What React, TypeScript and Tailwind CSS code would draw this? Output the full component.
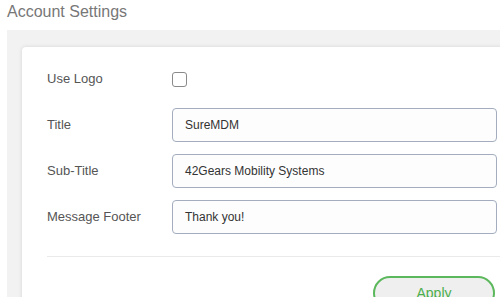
import React from "react";

const font = { fontFamily: '"Liberation Sans", Arial, sans-serif' };

function Row({ label, children }: { label: string; children: React.ReactNode }) {
  return (
    <div className="flex h-[34px] items-center">
      <div className="w-[125px] text-[13px] text-[#555]">{label}</div>
      {children}
    </div>
  );
}

function Field({ value }: { value: string }) {
  return (
    <div className="flex h-[34px] w-[325px] items-center rounded-[4px] border border-[#a3adbf] bg-[#fdfdfd] pl-[12px] text-[12px] text-[#333]">
      {value}
    </div>
  );
}

export default function App() {
  return (
    <div className="h-[297px] w-[500px] overflow-hidden bg-white" style={font}>
      <div className="h-[30px] pl-[7px] pt-[3px] text-[16px] leading-[18px] text-[#777]">Account Settings</div>
      <div className="ml-[7px] w-[540px] bg-[#f2f2f2] pl-[15px] pt-[17px]">
        <div className="rounded-[4px] bg-white pb-[20px] pl-[25px] pt-[15px] shadow-[0_0_4px_rgba(0,0,0,0.12)]">
          <div className="flex flex-col gap-[12px]">
            <Row label="Use Logo">
              <div className="h-[15px] w-[15px] rounded-[3px] border border-[#8a8a8a] bg-white" />
            </Row>
            <Row label="Title">
              <Field value="SureMDM" />
            </Row>
            <Row label="Sub-Title">
              <Field value="42Gears Mobility Systems" />
            </Row>
            <Row label="Message Footer">
              <Field value="Thank you!" />
            </Row>
          </div>
          <div className="mt-[22px] h-px bg-[#eaeaea]" />
          <div className="flex w-[448px] justify-end pt-[19px]">
            <div className="flex h-[34px] w-[122px] items-center justify-center rounded-full border-2 border-[#5cb85c] bg-[#efefef] text-[14px] text-[#4cae4c]">
              Apply
            </div>
          </div>
        </div>
      </div>
    </div>
  );
}
